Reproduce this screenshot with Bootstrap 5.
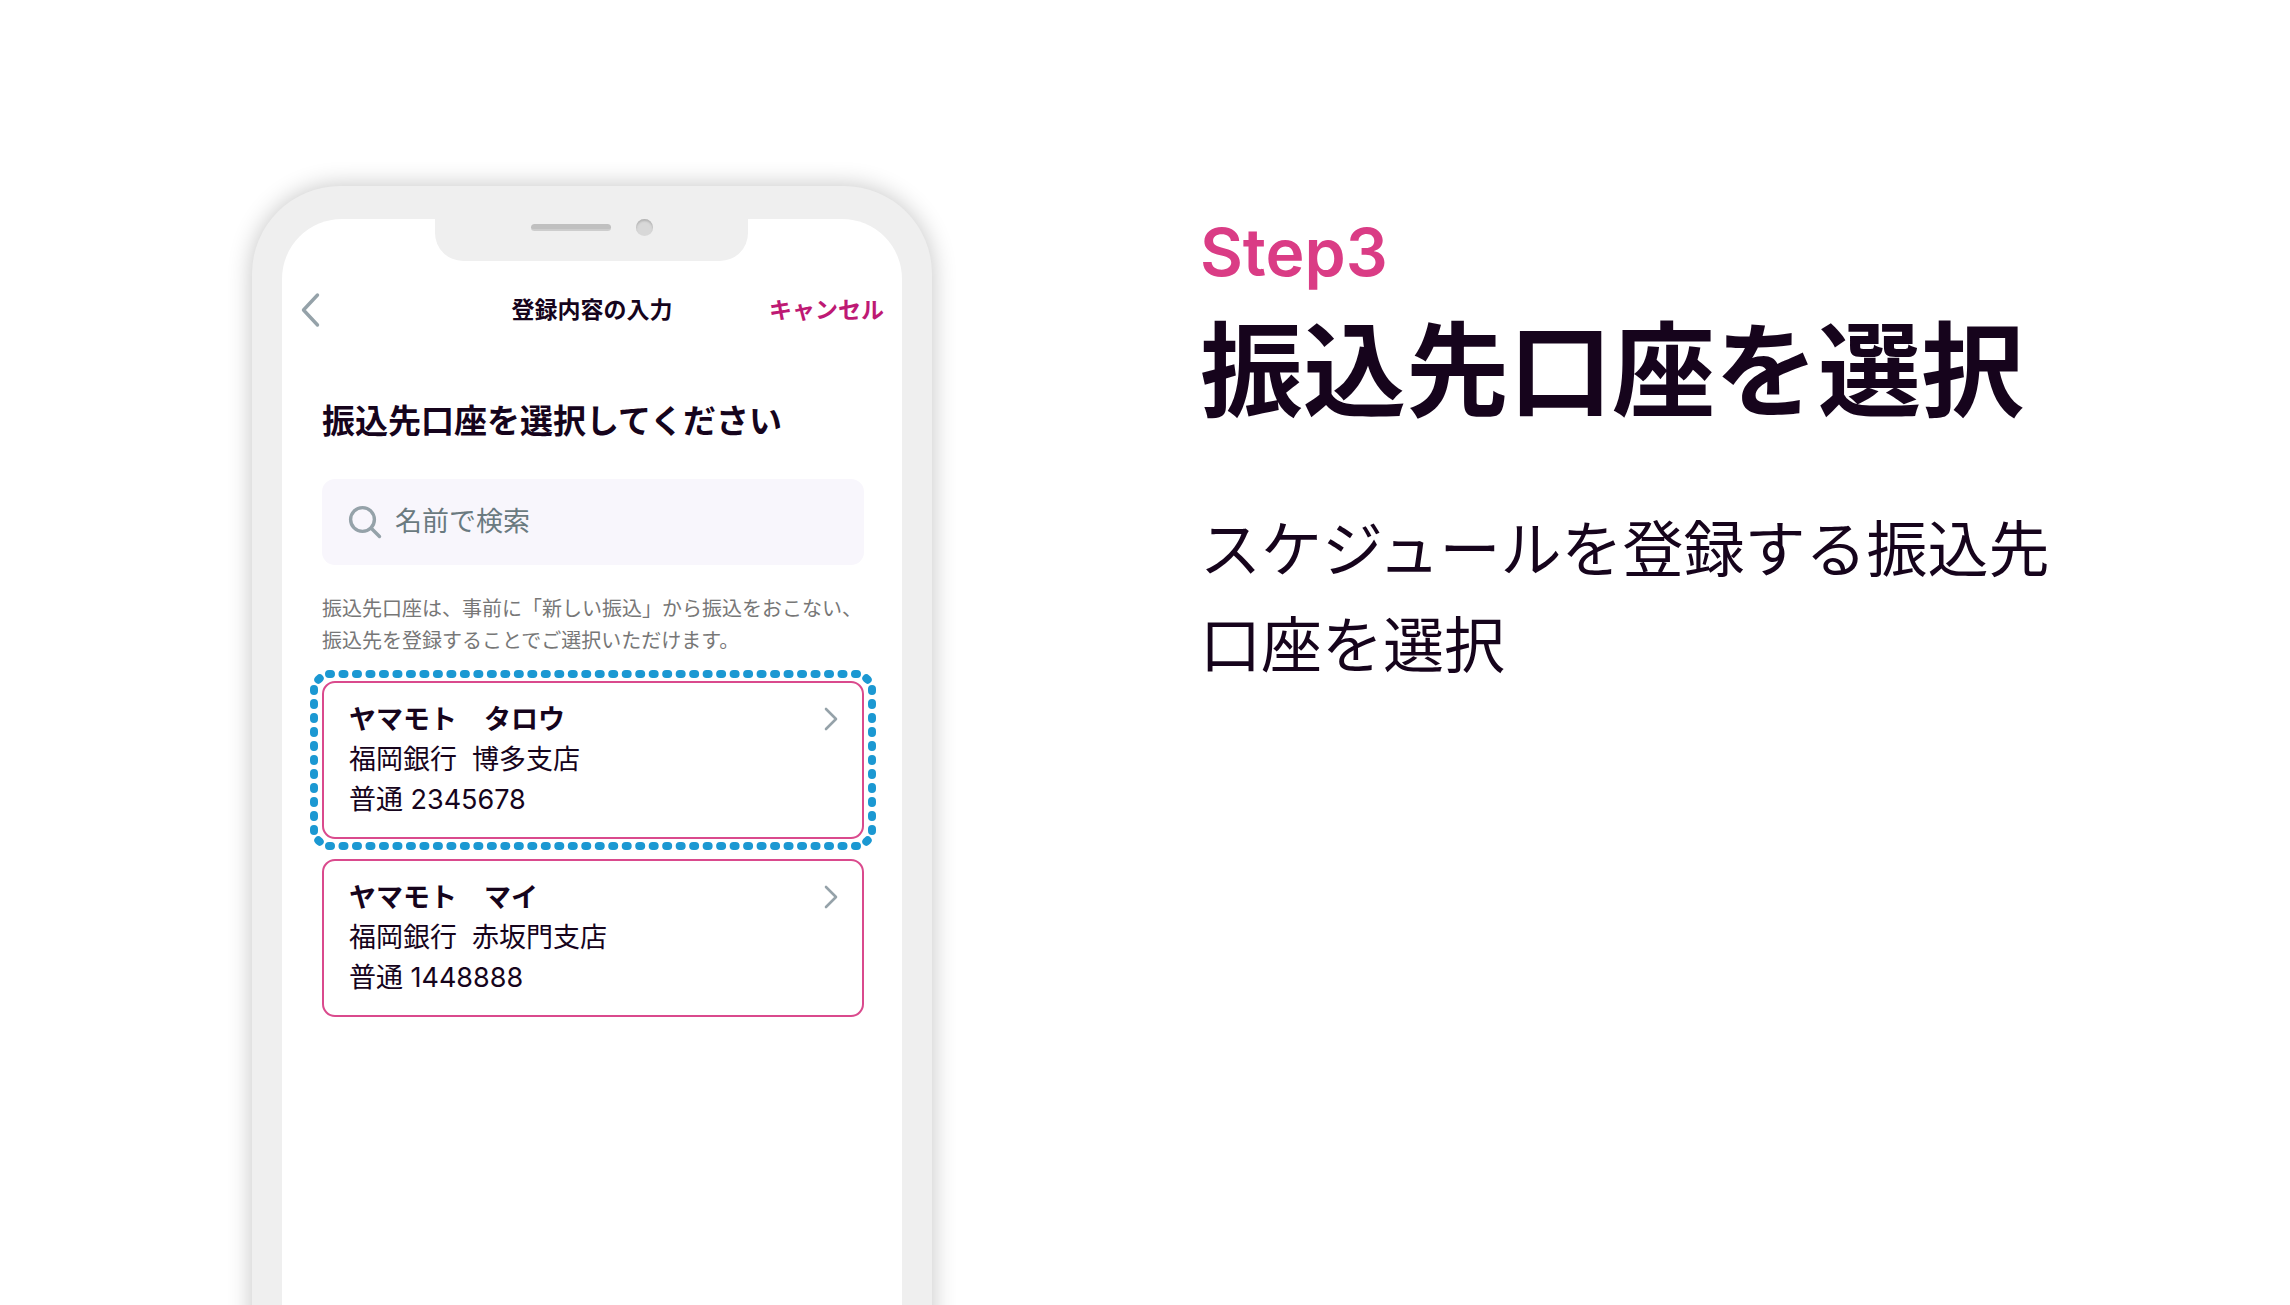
<!DOCTYPE html>
<html lang="ja">
<head>
<meta charset="utf-8">
<meta name="viewport" content="width=device-width, initial-scale=1">
<title>Step3 振込先口座を選択</title>
<link href="https://cdn.jsdelivr.net/npm/bootstrap@5.3.0/dist/css/bootstrap.min.css" rel="stylesheet">
<style>
  body { font-family: Inter, "Noto Sans CJK JP", sans-serif; color: #16041c; background: #fff; }
  .stage { padding: 186px 8% 0 11%; gap: 0 268px; }
  .phone { flex: 0 1 680px; margin-bottom: -48px; background: #efefef; border-radius: 88px 88px 0 0; padding: 33px 30px 0; box-shadow: 0 0 24px rgba(0, 0, 0, .24); }
  .screen { background: #fff; border-radius: 60px 60px 0 0; }
  .notch { width: 313px; height: 42px; background: #efefef; border-radius: 0 0 28px 28px; gap: 25px; padding-bottom: 26px; }
  .speaker { width: 80px; height: 7px; border-radius: 4px; background: #c0c0c0; border-bottom: 2px solid #cdcdcd; }
  .camera { width: 17px; height: 17px; border-radius: 50%; background: #d8d8d8; box-shadow: inset 0 2px 2px #b4b4b4; }
  .topbar { height: 48px; margin-top: 25px; padding: 0 18px; font-size: 23px; line-height: 32px; }
  .cancel { color: #be1974; }
  .content { padding: 67px 38px 0 40px; }
  .question { font-size: 33px; line-height: 40px; margin-bottom: 38px; }
  .search { height: 86px; background: #f8f6fc; border-radius: 13px; padding: 0 26px; gap: 13px; margin-bottom: 28px; }
  .search input { font-size: 27px; line-height: 40px; color: #6a7a80; }
  .search input::placeholder { color: #6a7a80; opacity: 1; }
  .note { font-size: 20px; line-height: 32px; color: #777; margin-bottom: 24px; }
  .accounts { gap: 20px; }
  .account { border: 2px solid #da4a8d; border-radius: 13px; padding: 17px 23px 17px 25px; font-size: 27px; line-height: 40px; color: inherit; }
  .account svg.next { margin-top: 6px; }
  .highlight { inset: -13px -14px; width: calc(100% + 28px); height: calc(100% + 26px); pointer-events: none; }
  .step { font-size: 66px; line-height: 80px; font-weight: 600; color: #da3c85; margin: 26px 0 20px; }
  .headline { font-size: 103px; line-height: 120px; margin-bottom: 70px; }
  .summary { font-size: 61px; line-height: 96px; max-width: 880px; }
</style>
<script src="https://cdn.jsdelivr.net/npm/bootstrap@5.3.0/dist/js/bootstrap.bundle.min.js"></script>
</head>
<body>
<main class="stage d-flex min-vh-100 overflow-hidden">
  <section class="phone d-flex flex-column">
    <div class="screen flex-grow-1">
      <div class="notch mx-auto d-flex align-items-center justify-content-center">
        <span class="speaker"></span><span class="camera"></span>
      </div>
      <div class="topbar row g-0 align-items-center">
        <div class="col"><button type="button" class="btn p-0 border-0 d-flex" aria-label="戻る">
          <svg width="21" height="36" viewBox="0 0 21 36" fill="none" stroke="#95a2a9" stroke-width="3.400" stroke-linecap="round" stroke-linejoin="round"><path d="M17.500 3 3.500 18l14 15"/></svg>
        </button></div>
        <div class="col-auto fw-bold">登録内容の入力</div>
        <div class="col text-end"><a href="#" class="cancel fw-bold text-decoration-none">キャンセル</a></div>
      </div>
      <div class="content">
        <h2 class="question fw-bold">振込先口座を選択してください</h2>
        <div class="search d-flex align-items-center">
          <label for="q" class="d-flex flex-shrink-0" aria-label="名前で検索"><svg width="34" height="34" viewBox="0 0 34 34" fill="none" stroke="#95a2a9" stroke-width="3.400" stroke-linecap="round"><circle cx="14.500" cy="14.500" r="11.900"/><path d="m23 23 8.500 8.500"/></svg></label>
          <input id="q" type="text" class="form-control border-0 bg-transparent p-0 shadow-none" placeholder="名前で検索">
        </div>
        <p class="note">振込先口座は、事前に「新しい振込」から振込をおこない、<br>振込先を登録することでご選択いただけます。</p>
        <div class="accounts d-flex flex-column">
          <a href="#" class="account position-relative d-flex justify-content-between align-items-start text-decoration-none">
            <span><b>ヤマモト　タロウ</b><br>福岡銀行&nbsp; 博多支店<br>普通 2345678</span>
            <svg class="next" width="16" height="26" viewBox="0 0 16 26" fill="none" stroke="#95a2a9" stroke-width="2.600" stroke-linecap="round" stroke-linejoin="round"><path d="m3 3 10 10L3 23"/></svg>
            <svg class="highlight position-absolute" viewBox="0 0 566 180" preserveAspectRatio="none" fill="none" stroke="#1b98d2" stroke-width="8" stroke-linecap="round">
              <path stroke-dasharray="2 11.487" d="M19 4h529M19 176h529"/>
              <path stroke-dasharray="2 12" d="M4 19v142.500M562 19v142.500"/>
              <path d="m8.300 9.700 1.400-1.400M556.300 8.300l1.400 1.400M8.300 170.300l1.400 1.400M556.300 171.700l1.400-1.400"/>
            </svg>
          </a>
          <a href="#" class="account d-flex justify-content-between align-items-start text-decoration-none">
            <span><b>ヤマモト　マイ</b><br>福岡銀行&nbsp; 赤坂門支店<br>普通 1448888</span>
            <svg class="next" width="16" height="26" viewBox="0 0 16 26" fill="none" stroke="#95a2a9" stroke-width="2.600" stroke-linecap="round" stroke-linejoin="round"><path d="m3 3 10 10L3 23"/></svg>
          </a>
        </div>
      </div>
    </div>
  </section>
  <section class="flex-grow-1 flex-shrink-1">
    <p class="step">Step3</p>
    <h1 class="headline fw-bold text-nowrap">振込先口座を選択</h1>
    <p class="summary mb-0">スケジュールを登録する振込先口座を選択</p>
  </section>
</main>
</body>
</html>
